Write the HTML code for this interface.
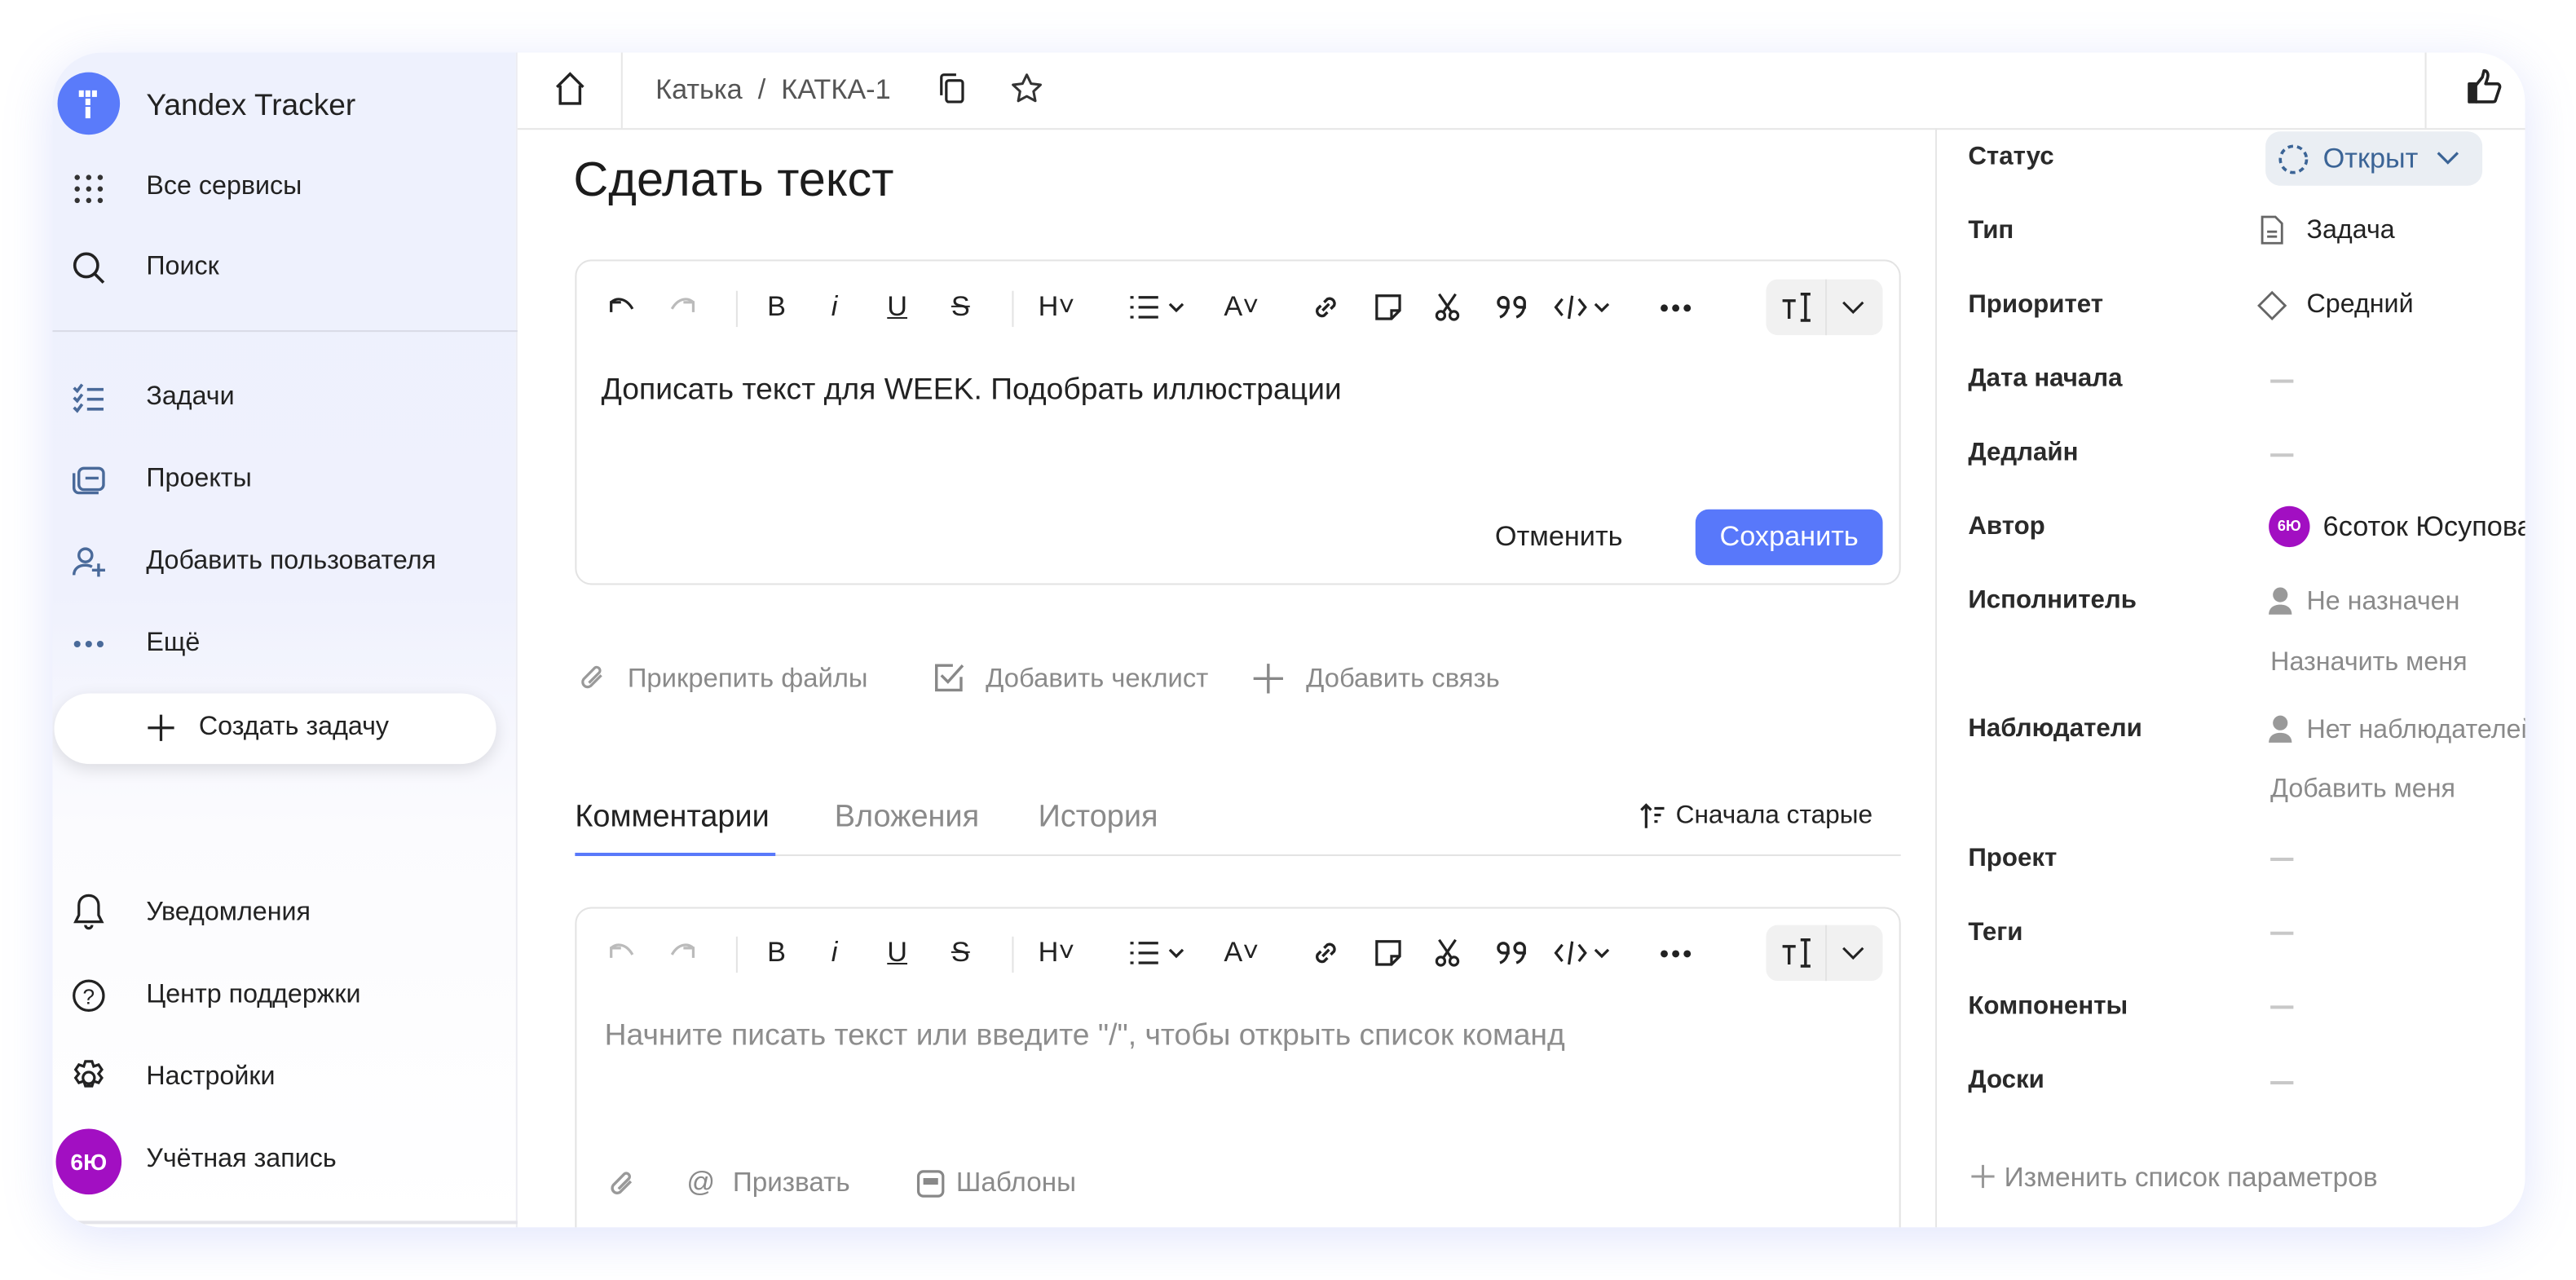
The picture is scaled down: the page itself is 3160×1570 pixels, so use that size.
<!DOCTYPE html>
<html><head><meta charset="utf-8"><style>
*{margin:0;padding:0;box-sizing:border-box}
html,body{width:3160px;height:1569px;overflow:hidden;background:#fff}
#s{position:absolute;left:0;top:0;width:1568px;height:779px;transform:scale(2.01531);transform-origin:0 0;font-family:"Liberation Sans","Noto Sans CJK SC",sans-serif;color:#1f1f1f}
.a{position:absolute;white-space:nowrap}
.card{position:absolute;left:32px;top:32px;width:1505px;height:715px;border-radius:30px;background:#fff;overflow:hidden;box-shadow:0 6px 30px rgba(120,135,240,.22)}
.side{position:absolute;left:0;top:0;width:283px;height:715px;background:linear-gradient(#eef1fd 0,#eff1fd 330px,#fbfbfe 470px,#fff 715px);border-right:1px solid #ececf2}
.nav{font-size:16px;color:#222}
.ic{position:absolute}
svg{overflow:visible}
.lbl{font-size:15.5px;font-weight:bold;color:#2a2a2a}
.val{font-size:16px;color:#222}
.g{color:#8a8a8a}
.dash{position:absolute;width:14px;height:2px;background:#c8c8c8}
.tb{font-size:17px;color:#222}
</style></head><body><div id="s">
<div class="card">
 <div class="side">
  <div class="a" style="left:3px;top:12px;width:38px;height:38px;border-radius:50%;background:#5a7bfa"></div>
  <div class="a" style="left:16px;top:23px;width:3px;height:4px;background:#fff"></div>
  <div class="a" style="left:20px;top:23px;width:3px;height:4px;background:#fff"></div>
  <div class="a" style="left:24px;top:23px;width:3px;height:4px;background:#fff"></div>
  <div class="a" style="left:20px;top:28px;width:3px;height:4px;background:#fff"></div>
  <div class="a" style="left:20px;top:33px;width:3px;height:7px;background:#fff"></div>
  <div class="a nav" style="left:57px;top:21px;font-size:18.4px">Yandex Tracker</div>
  <svg class="ic" style="left:12px;top:73px" width="20" height="20"><g fill="#333"><circle cx="3" cy="3" r="1.6"/><circle cx="10" cy="3" r="1.6"/><circle cx="17" cy="3" r="1.6"/><circle cx="3" cy="10" r="1.6"/><circle cx="10" cy="10" r="1.6"/><circle cx="17" cy="10" r="1.6"/><circle cx="3" cy="17" r="1.6"/><circle cx="10" cy="17" r="1.6"/><circle cx="17" cy="17" r="1.6"/></g></svg>
  <div class="a nav" style="left:57px;top:73px">Все сервисы</div>
  <svg class="ic" style="left:12px;top:121px" width="20" height="20"><circle cx="8.5" cy="8.5" r="7" fill="none" stroke="#222" stroke-width="1.8"/><path d="M13.5 13.5L19 19" stroke="#222" stroke-width="1.8"/></svg>
  <div class="a nav" style="left:57px;top:122px">Поиск</div>
  <div class="a" style="left:0;top:169px;width:283px;height:1px;background:#d9dbe6"></div>
  <svg class="ic" style="left:12px;top:201px" width="20" height="18"><g stroke="#4a6a9a" stroke-width="1.8" fill="none"><path d="M1 3l2 2 3-4M1 9l2 2 3-4M1 15l2 2 3-4"/><path d="M9 4h10M9 10h10M9 16h10"/></g></svg>
  <div class="a nav" style="left:57px;top:201px">Задачи</div>
  <svg class="ic" style="left:11px;top:250px" width="22" height="20"><g stroke="#4a6a9a" stroke-width="1.7" fill="none"><rect x="5" y="3" width="15" height="13" rx="3"/><path d="M2 6v9a3 3 0 003 3h12"/><path d="M9 9h8"/></g></svg>
  <div class="a nav" style="left:57px;top:251px">Проекты</div>
  <svg class="ic" style="left:12px;top:300px" width="22" height="20"><g stroke="#4a6a9a" stroke-width="1.7" fill="none"><circle cx="8" cy="6" r="4"/><path d="M1 18c0-4 3-6 7-6 2 0 3 .4 4 1"/><path d="M16 11v8M12 15h8"/></g></svg>
  <div class="a nav" style="left:57px;top:301px">Добавить пользователя</div>
  <svg class="ic" style="left:12px;top:357px" width="20" height="6"><g fill="#4a6a9a"><circle cx="3" cy="3" r="2"/><circle cx="10" cy="3" r="2"/><circle cx="17" cy="3" r="2"/></g></svg>
  <div class="a nav" style="left:57px;top:351px">Ещё</div>
  <div class="a" style="left:1px;top:390px;width:269px;height:43px;border-radius:22px;background:#fff;box-shadow:0 3px 10px rgba(0,0,0,.12)"></div>
  <svg class="ic" style="left:58px;top:403px" width="16" height="16"><path d="M8 0v16M0 8h16" stroke="#222" stroke-width="1.6"/></svg>
  <div class="a nav" style="left:89px;top:402px">Создать задачу</div>
  <svg class="ic" style="left:13px;top:512px" width="18" height="22"><g stroke="#222" stroke-width="1.6" fill="none"><path d="M9 1c-4 0-6 3-6 6v6l-2 4h16l-2-4V7c0-3-2-6-6-6z"/><path d="M7 19a2 2 0 004 0"/></g></svg>
  <div class="a nav" style="left:57px;top:515px">Уведомления</div>
  <svg class="ic" style="left:12px;top:563px" width="20" height="22"><circle cx="10" cy="11" r="9" fill="none" stroke="#222" stroke-width="1.6"/><text x="10" y="16" font-size="13" text-anchor="middle" fill="#222" font-family="Liberation Sans">?</text></svg>
  <div class="a nav" style="left:57px;top:565px">Центр поддержки</div>
  <svg class="ic" style="left:11px;top:613px" width="22" height="22"><g stroke="#222" stroke-width="1.6" fill="none"><circle cx="11" cy="11" r="3.5"/><path d="M9 1h4l1 3 3-1 2 3-2 2.5 2 2.5-2 3-3-1-1 3H9l-1-3-3 1-2-3 2-2.5L3 6l2-3 3 1z"/></g></svg>
  <div class="a nav" style="left:57px;top:615px">Настройки</div>
  <div class="a" style="left:2px;top:655px;width:40px;height:40px;border-radius:50%;background:#a20fc2;color:#fff;font-size:14px;font-weight:bold;text-align:center;line-height:40px">6Ю</div>
  <div class="a nav" style="left:57px;top:665px">Учётная запись</div>
  <div class="a" style="left:0;top:711px;width:283px;height:2px;background:#e4e4ea"></div>
 </div>
 <div class="a" style="left:283px;top:46px;width:1222px;height:1px;background:#e6e6e6"></div>
 <div class="a" style="left:346px;top:0;width:1px;height:46px;background:#e6e6e6"></div>
 <div class="a" style="left:1444px;top:0;width:1px;height:46px;background:#e6e6e6"></div>
 <svg class="ic" style="left:305px;top:11px" width="20" height="22"><path d="M2 10L10 2l8 8M4 9v11h12V9" stroke="#222" stroke-width="1.7" fill="none"/></svg>
 <div class="a" style="left:367px;top:13px;font-size:17px;color:#555">Катька &nbsp;/&nbsp; КАТКА-1</div>
 <svg class="ic" style="left:539px;top:12px" width="18" height="20"><g stroke="#222" stroke-width="1.6" fill="none"><rect x="5" y="5" width="10" height="13" rx="1.5"/><path d="M2 14V3a1.5 1.5 0 011.5-1.5H11"/></g></svg>
 <svg class="ic" style="left:583px;top:12px" width="20" height="20"><path d="M10 1.5l2.6 5.4 5.8.7-4.3 4 1.1 5.8L10 14.6l-5.2 2.8 1.1-5.8-4.3-4 5.8-.7z" stroke="#333" stroke-width="1.5" fill="none" stroke-linejoin="round"/></svg>
 <svg class="ic" style="left:1470px;top:10px" width="22" height="22"><g stroke="#222" stroke-width="1.8" fill="none" stroke-linejoin="round"><rect x="1" y="9" width="4" height="11" fill="#222"/><path d="M5 10l4-5 1-4c2 0 3 2 2 5l-1 3h7c1 0 2 1 1.5 2.5l-2.5 7.5c-.3 1-1 1-2 1H5"/></g></svg>
 <div class="a" style="left:317px;top:61px;font-size:29.5px;color:#1c1c1c">Сделать текст</div>
 <div class="a" style="left:318px;top:126px;width:807px;height:198px;border:1.5px solid #e3e3e3;border-radius:10px"></div>
 <div class="a" style="left:318px;top:520px;width:807px;height:220px;border:1.5px solid #e3e3e3;border-radius:10px"></div>
 <div class="a" style="left:334px;top:194px;font-size:18.5px;color:#222">Дописать текст для WEEK. Подобрать иллюстрации</div>
 <div class="a" style="left:878px;top:285px;font-size:17px;color:#222">Отменить</div>
 <div class="a" style="left:1000px;top:278px;width:114px;height:34px;border-radius:8px;background:#5878fa;color:#fff;font-size:17px;text-align:center;line-height:34px">Сохранить</div>
 <svg class="ic" style="left:320px;top:371px" width="18" height="20"><path d="M14 8l-6.5 6.5a3 3 0 01-4.2-4.2L10 3.5a2 2 0 012.8 2.8L6.5 12.6" stroke="#999" stroke-width="1.6" fill="none"/></svg>
 <div class="a g" style="left:350px;top:372px;font-size:16.3px">Прикрепить файлы</div>
 <svg class="ic" style="left:536px;top:371px" width="20" height="20"><g stroke="#888" stroke-width="1.7" fill="none"><path d="M17 9v8H2V2h10"/><path d="M5 8l4 4 9-10"/></g></svg>
 <div class="a g" style="left:568px;top:372px;font-size:16.3px">Добавить чеклист</div>
 <svg class="ic" style="left:731px;top:372px" width="18" height="18"><path d="M9 0v18M0 9h18" stroke="#888" stroke-width="1.7"/></svg>
 <div class="a g" style="left:763px;top:372px;font-size:16.3px">Добавить связь</div>
 <div class="a" style="left:318px;top:454px;font-size:18.8px;color:#222">Комментарии</div>
 <div class="a g" style="left:476px;top:454px;font-size:18.8px">Вложения</div>
 <div class="a g" style="left:600px;top:454px;font-size:18.8px">История</div>
 <div class="a" style="left:318px;top:488px;width:807px;height:1px;background:#e3e3e3"></div>
 <div class="a" style="left:318px;top:487px;width:122px;height:2px;background:#5878fa"></div>
 <svg class="ic" style="left:966px;top:457px" width="16" height="16"><g stroke="#222" stroke-width="1.6" fill="none"><path d="M4 15V1M1 4l3-3 3 3M9 3h6M9 7h4M9 11h2"/></g></svg>
 <div class="a" style="left:988px;top:456px;font-size:15.7px;color:#222">Сначала старые</div>
 <div class="a" style="left:336px;top:587px;font-size:18.5px;color:#8d8d8d">Начните писать текст или введите "/", чтобы открыть список команд</div>
 <svg class="ic" style="left:338px;top:679px" width="18" height="20"><path d="M14 8l-6.5 6.5a3 3 0 01-4.2-4.2L10 3.5a2 2 0 012.8 2.8L6.5 12.6" stroke="#999" stroke-width="1.7" fill="none"/></svg>
 <div class="a g" style="left:386px;top:678px;font-size:17px">@</div>
 <div class="a g" style="left:414px;top:679px;font-size:16.5px">Призвать</div>
 <svg class="ic" style="left:526px;top:680px" width="17" height="17"><rect x="1" y="1" width="15" height="15" rx="3" fill="none" stroke="#888" stroke-width="1.6"/><rect x="4" y="5" width="9" height="4" fill="#888"/></svg>
 <div class="a g" style="left:550px;top:679px;font-size:16.5px">Шаблоны</div>
 <div class="a" style="left:1146px;top:46px;width:1px;height:669px;background:#e6e6e6"></div>
 <div class="a lbl" style="left:1166px;top:55px">Статус</div>
 <div class="a" style="left:1347px;top:48px;width:132px;height:33px;border-radius:9px;background:#eaeef3"></div>
 <svg class="ic" style="left:1355px;top:56px" width="18" height="18"><circle cx="9" cy="9" r="8" fill="none" stroke="#3b6496" stroke-width="1.8" stroke-dasharray="3.2 2.5"/></svg>
 <div class="a" style="left:1382px;top:55px;font-size:17px;color:#3b6496">Открыт</div>
 <svg class="ic" style="left:1451px;top:60px" width="14" height="9"><path d="M1 1l6 6 6-6" stroke="#3b6496" stroke-width="1.6" fill="none"/></svg>
 <div class="a lbl" style="left:1166px;top:100px">Тип</div>
 <svg class="ic" style="left:1344px;top:99px" width="14" height="18"><g stroke="#666" stroke-width="1.4" fill="none"><path d="M1 1h8l4 4v12H1z"/><path d="M4 10h6M4 13h6"/></g></svg>
 <div class="a val" style="left:1372px;top:100px">Задача</div>
 <div class="a lbl" style="left:1166px;top:145px">Приоритет</div>
 <svg class="ic" style="left:1342px;top:145px" width="18" height="18"><path d="M9 1l8 8-8 8-8-8z" stroke="#666" stroke-width="1.4" fill="none"/></svg>
 <div class="a val" style="left:1372px;top:145px">Средний</div>
 <div class="a lbl" style="left:1166px;top:190px">Дата начала</div><div class="dash" style="left:1350px;top:199px"></div>
 <div class="a lbl" style="left:1166px;top:235px">Дедлайн</div><div class="dash" style="left:1350px;top:244px"></div>
 <div class="a lbl" style="left:1166px;top:280px">Автор</div>
 <div class="a" style="left:1349px;top:276px;width:25px;height:25px;border-radius:50%;background:#a20fc2;color:#fff;font-size:9px;font-weight:bold;text-align:center;line-height:25px">6Ю</div>
 <div class="a val" style="left:1382px;top:279px;font-size:17px">6соток Юсупова</div>
 <div class="a lbl" style="left:1166px;top:325px">Исполнитель</div>
 <svg class="ic" style="left:1349px;top:325px" width="14" height="18"><circle cx="7" cy="5" r="4.5" fill="#999"/><path d="M0 17c0-4 3-6 7-6s7 2 7 6z" fill="#999"/></svg>
 <div class="a g" style="left:1372px;top:326px;font-size:16px">Не назначен</div>
 <div class="a g" style="left:1350px;top:363px;font-size:16px">Назначить меня</div>
 <div class="a lbl" style="left:1166px;top:403px">Наблюдатели</div>
 <svg class="ic" style="left:1349px;top:403px" width="14" height="18"><circle cx="7" cy="5" r="4.5" fill="#999"/><path d="M0 17c0-4 3-6 7-6s7 2 7 6z" fill="#999"/></svg>
 <div class="a g" style="left:1372px;top:404px;font-size:16px">Нет наблюдателей</div>
 <div class="a g" style="left:1350px;top:440px;font-size:16px">Добавить меня</div>
 <div class="a lbl" style="left:1166px;top:482px">Проект</div><div class="dash" style="left:1350px;top:490px"></div>
 <div class="a lbl" style="left:1166px;top:527px">Теги</div><div class="dash" style="left:1350px;top:535px"></div>
 <div class="a lbl" style="left:1166px;top:572px">Компоненты</div><div class="dash" style="left:1350px;top:580px"></div>
 <div class="a lbl" style="left:1166px;top:617px">Доски</div><div class="dash" style="left:1350px;top:626px"></div>
 <svg class="ic" style="left:1168px;top:677px" width="14" height="14"><path d="M7 0v14M0 7h14" stroke="#999" stroke-width="1.5"/></svg>
 <div class="a g" style="left:1188px;top:675px;font-size:16.6px">Изменить список параметров</div>
</div>
</div>
<script>
function tb(y,dis){
 var s=document.getElementById('s');var h='';
 var c=dis?'#bbb':'#222';
 h+='<svg class="ic" style="position:absolute;left:369px;top:'+(y-7)+'px" width="18" height="12"><path d="M3 10V4h6M3 4c3-3 9-3 13 4" stroke="'+c+'" stroke-width="1.6" fill="none"/></svg>';
 h+='<svg class="ic" style="position:absolute;left:407px;top:'+(y-7)+'px" width="18" height="12"><path d="M15 10V4H9M15 4C12 1 6 1 2 8" stroke="#bbb" stroke-width="1.6" fill="none"/></svg>';
 h+='<div class="a" style="left:448px;top:'+(y-10)+'px;width:1px;height:22px;background:#e3e3e3"></div>';
 h+='<div class="a" style="left:616px;top:'+(y-10)+'px;width:1px;height:22px;background:#e3e3e3"></div>';
 var it=[[467,'B'],[506,'<i>i</i>'],[540,'<u>U</u>'],[579,'<s>S</s>'],[632,'H˅'],[745,'A˅']];
 it.forEach(function(t){h+='<div class="a tb" style="left:'+t[0]+'px;top:'+(y-10)+'px">'+t[1]+'</div>';});
 h+='<svg style="position:absolute;left:687px;top:'+(y-8)+'px" width="40" height="16"><g stroke="#222" stroke-width="1.6" fill="none"><path d="M1 2h2M1 8h2M1 14h2M6 2h12M6 8h12M6 14h12M25 6l4 4 4-4"/></g></svg>';
 h+='<svg style="position:absolute;left:798px;top:'+(y-9)+'px" width="18" height="18"><g stroke="#222" stroke-width="1.7" fill="none"><path d="M7 11l4-4M6 8l-2 2a3 3 0 004 4l2-2M12 10l2-2a3 3 0 00-4-4L8 6"/></g></svg>';
 h+='<svg style="position:absolute;left:837px;top:'+(y-8)+'px" width="16" height="16"><path d="M1 1h14v9l-5 5H1z M10 15v-5h5" stroke="#222" stroke-width="1.6" fill="none"/></svg>';
 h+='<svg style="position:absolute;left:873px;top:'+(y-9)+'px" width="16" height="18"><g stroke="#222" stroke-width="1.6" fill="none"><circle cx="4" cy="14" r="2.5"/><circle cx="12" cy="14" r="2.5"/><path d="M5.5 12L13 1M10.5 12L3 1"/></g></svg>';
 h+='<svg style="position:absolute;left:910px;top:'+(y-8)+'px" width="20" height="16"><g stroke="#222" stroke-width="1.7" fill="none"><path d="M8 5a3 3 0 10-3 3h3v-3c0 5-2 8-5 9M18 5a3 3 0 10-3 3h3v-3c0 5-2 8-5 9"/></g></svg>';
 h+='<svg style="position:absolute;left:946px;top:'+(y-9)+'px" width="38" height="18"><g stroke="#222" stroke-width="1.6" fill="none"><path d="M5 4L1 9l4 5M15 4l4 5-4 5M11 2L9 16M25 7l4 4 4-4"/></g></svg>';
 h+='<svg style="position:absolute;left:1010px;top:'+(y-2)+'px" width="22" height="5"><g fill="#222"><circle cx="3" cy="2.5" r="2.2"/><circle cx="10" cy="2.5" r="2.2"/><circle cx="17" cy="2.5" r="2.2"/></g></svg>';
 h+='<div class="a" style="left:1075px;top:'+(y-17)+'px;width:71px;height:34px;border-radius:7px;background:#f1f1f1"></div>';
 h+='<div class="a" style="left:1111px;top:'+(y-17)+'px;width:1px;height:34px;background:#e4e4e4"></div>';
 h+='<svg style="position:absolute;left:1084px;top:'+(y-9)+'px" width="20" height="18"><g stroke="#222" stroke-width="1.7" fill="none"><path d="M1 5h8M5 5v11M15 1v16M12 1h6M12 17h6"/></g></svg>';
 h+='<svg style="position:absolute;left:1121px;top:'+(y-4)+'px" width="14" height="9"><path d="M1 1l6 6 6-6" stroke="#222" stroke-width="1.5" fill="none"/></svg>';
 s.insertAdjacentHTML('beforeend',h);
}
tb(187,false);tb(580,true);
</script>
</body></html>
